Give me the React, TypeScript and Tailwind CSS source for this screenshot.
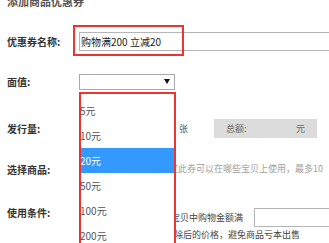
import React from "react";

const font = { fontFamily: '"Noto Sans CJK SC", "Noto Sans", sans-serif' };

export default function App() {
  const options = ["5元", "10元", "20元", "50元", "100元", "200元"];
  return (
    <div
      className="relative w-[329px] h-[243px] overflow-hidden bg-white text-[#333]"
      style={font}
    >
      {/* Title */}
      <div className="h-[8px] overflow-hidden pl-[7px]">
        <div className="-mt-[5px] text-[11px] leading-[13px] font-bold text-[#555] whitespace-nowrap">
          添加商品优惠券
        </div>
      </div>

      {/* Row 1 */}
      <div className="mt-[20px] h-[26px] flex items-center">
        <div className="w-[79px] shrink-0 pl-[7px] text-[10px] font-bold whitespace-nowrap">
          优惠券名称:
        </div>
        <div className="shrink-0 w-[270px] h-[19px] border border-[#b5b5b5] flex items-center pl-[1px] text-[10px] text-[#222] whitespace-nowrap">
          购物满200 立减20
        </div>
      </div>

      {/* Row 2 */}
      <div className="mt-[19px] h-[17px] flex items-center">
        <div className="w-[79px] shrink-0 pl-[7px] text-[10px] font-bold whitespace-nowrap">
          面值:
        </div>
        <div className="shrink-0 w-[96px] h-[16px] border border-[#a9a9a9] flex items-center justify-end pr-[4px]">
          <svg width="6" height="5" viewBox="0 0 6 5">
            <polygon points="0,0 6,0 3,5" fill="#111" />
          </svg>
        </div>
      </div>

      {/* Row 3 */}
      <div className="mt-[28px] h-[21px] flex items-center">
        <div className="w-[79px] shrink-0 pl-[7px] text-[10px] font-bold whitespace-nowrap">
          发行量:
        </div>
        <div className="w-[100px] shrink-0" />
        <div className="text-[9px] text-[#555] w-[9px] shrink-0">张</div>
        <div className="ml-[26px] shrink-0 w-[103px] h-[19px] bg-[#dcdcdc] flex items-center justify-between pl-[12px] pr-[12px] text-[9px] text-[#666]">
          <span>总额:</span>
          <span>元</span>
        </div>
      </div>

      {/* Row 4 */}
      <div className="mt-[21px] h-[18px] flex items-center">
        <div className="w-[79px] shrink-0 pl-[7px] text-[10px] font-bold whitespace-nowrap">
          选择商品:
        </div>
        <div className="w-[90px] shrink-0" />
        <div className="text-[9px] text-[#a0a0a0] whitespace-nowrap">
          定此券可以在哪些宝贝上使用，最多10
        </div>
      </div>

      {/* Row 5 */}
      <div className="mt-[27px] flex items-start">
        <div className="w-[79px] shrink-0 pl-[7px] h-[16px] leading-[16px] text-[10px] font-bold whitespace-nowrap">
          使用条件:
        </div>
        <div className="w-[92px] shrink-0" />
        <div className="flex flex-col text-[9px] text-[#444]">
          <div className="mt-[3px] h-[19px] flex items-center">
            <span className="whitespace-nowrap">宝贝中购物金额满</span>
            <div className="ml-[11px] shrink-0 w-[100px] h-[19px] border border-[#b5b5b5]" />
          </div>
          <div className="ml-[3px] h-[16px] leading-[16px] whitespace-nowrap">
            除后的价格，避免商品亏本出售
          </div>
        </div>
      </div>

      {/* Annotation box around name input */}
      <div className="absolute left-[73px] top-[25px] w-[111px] h-[31px] border-2 border-[#ee3333] pointer-events-none" />

      {/* Dropdown list */}
      <div className="absolute left-[80px] top-[93px] w-[95px] h-[160px] bg-white pt-[5px]">
        {options.map((o) => (
          <div
            key={o}
            className={
              "h-[25px] leading-[25px] text-[10px] whitespace-nowrap " +
              (o === "20元" ? "bg-[#3399ff] text-white" : "text-[#555]")
            }
          >
            {o}
          </div>
        ))}
      </div>
      <div className="absolute left-[79px] top-[92px] w-[97px] h-[170px] border-2 border-[#ee3333] pointer-events-none" />
    </div>
  );
}
